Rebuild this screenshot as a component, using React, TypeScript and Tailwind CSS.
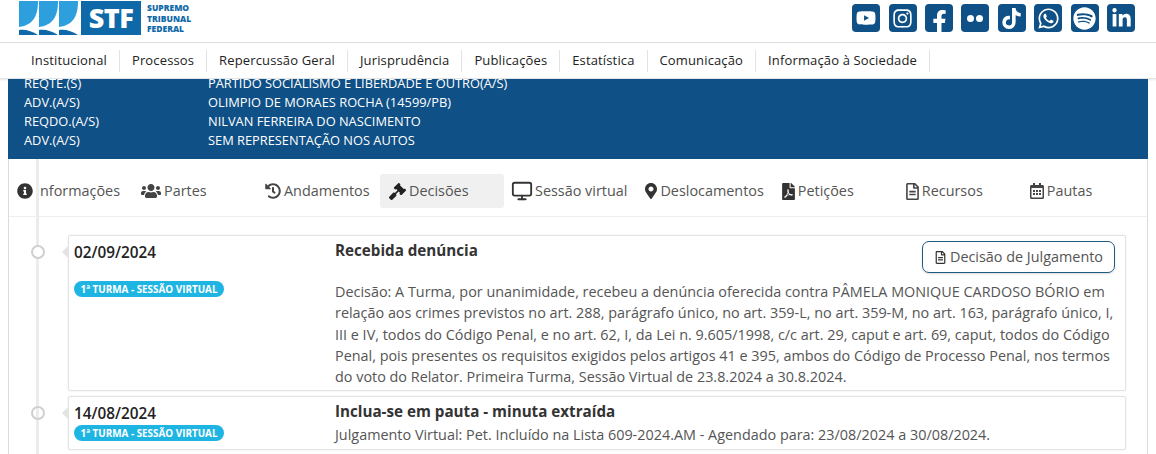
import { FaYoutube, FaInstagram, FaFacebookF, FaTiktok, FaWhatsapp, FaSpotify, FaLinkedinIn, FaInfoCircle, FaUsers, FaHistory, FaGavel, FaMapMarkerAlt, FaFilePdf, FaRegFileAlt, FaRegCalendarAlt } from "react-icons/fa";
import { LuMonitor } from "react-icons/lu";
import type { ReactNode } from "react";

const navItems = ["Institucional", "Processos", "Repercussão Geral", "Jurisprudência", "Publicações", "Estatística", "Comunicação", "Informação à Sociedade"];

const parties = [
  ["REQTE.(S)", "PARTIDO SOCIALISMO E LIBERDADE E OUTRO(A/S)"],
  ["ADV.(A/S)", "OLIMPIO DE MORAES ROCHA (14599/PB)"],
  ["REQDO.(A/S)", "NILVAN FERREIRA DO NASCIMENTO"],
  ["ADV.(A/S)", "SEM REPRESENTAÇÃO NOS AUTOS"],
];

const tabs: { label: string; icon: ReactNode; active?: boolean }[] = [
  { label: "Informações", icon: <FaInfoCircle className="h-[16px] w-[16px] text-[#333]" /> },
  { label: "Partes", icon: <FaUsers className="h-[20px] w-[20px] text-[#444]" /> },
  { label: "Andamentos", icon: <FaHistory className="h-[16px] w-[16px] text-[#444]" /> },
  { label: "Decisões", icon: <FaGavel className="h-[17px] w-[17px] text-[#222]" />, active: true },
  { label: "Sessão virtual", icon: <LuMonitor className="-mr-[1px] -ml-[2px] h-[22px] w-[22px] text-[#333]" /> },
  { label: "Deslocamentos", icon: <FaMapMarkerAlt className="h-[16px] w-[12px] text-[#333]" /> },
  { label: "Petições", icon: <FaFilePdf className="h-[17px] w-[13px] text-[#333]" /> },
  { label: "Recursos", icon: <FaRegFileAlt className="h-[17px] w-[13px] text-[#444]" /> },
  { label: "Pautas", icon: <FaRegCalendarAlt className="h-[16px] w-[14px] text-[#444]" /> },
];

function Social({ children }: { children: ReactNode }) {
  return <div className="flex h-[28px] w-[28px] items-center justify-center overflow-hidden rounded-[4px] bg-[#0f5086] text-white">{children}</div>;
}

function Logo() {
  return (
    <div className="flex items-start pl-[19px] pt-px">
      <svg width="61" height="34" viewBox="0 0 61 34">
        {[0, 20, 40].map((x) => (
          <g key={x}>
            <path d={`M${x} 0H${x + 19}C${x + 19} 14 ${x + 15} 24 ${x} 26Z`} fill="#2d9fdc" />
            <path d={`M${x} 29C${x + 6} 28 ${x + 13} 30 ${x + 19} 34H${x}Z`} fill="#0f69a8" />
          </g>
        ))}
      </svg>
      <div className="ml-px flex h-[34px] w-[60px] items-center justify-center bg-[#0f69a8] text-[27px] font-extrabold tracking-[-0.5px] text-white">STF</div>
      <div className="mt-[2px] ml-[6px] text-[8.5px] leading-[10.5px] font-extrabold text-[#0f69a8]">
        <div>SUPREMO</div>
        <div>TRIBUNAL</div>
        <div>FEDERAL</div>
      </div>
    </div>
  );
}

function Card({ date, title, compact, button, children }: { date: string; title: string; compact?: boolean; button?: boolean; children: ReactNode }) {
  return (
    <div className="relative flex rounded-[2px] border border-[#e3e3e3] bg-white pl-[5px] shadow-[0_0_2px_rgba(0,0,0,0.08)]">
      <div className={`absolute top-[9px] left-[-38px] z-20 h-[14px] w-[14px] rounded-full border-2 border-[#cfcfcf] ${compact ? "" : "bg-white"}`} />
      <div className="absolute top-[9px] left-[-7px] h-0 w-0 border-y-[7px] border-r-[7px] border-y-transparent border-r-[#e3e3e3]" />
      <div className="w-[261px] shrink-0">
        <div className="mt-[6px] text-[15.3px] leading-[20px] font-semibold text-[#222]">{date}</div>
        <div className={`flex h-[16px] w-[150px] items-center justify-center rounded-full bg-[#1fb5e3] text-[9.9px] font-bold whitespace-nowrap text-white ${compact ? "mt-[2px]" : "mt-[19px]"}`}>1ª TURMA - SESSÃO VIRTUAL</div>
      </div>
      <div className="min-w-0 flex-1 pr-[10px]">
        <div className="flex justify-between">
          <div className="mt-[4px] text-[15.2px] leading-[20px] font-bold text-[#333]">{title}</div>
          {button && (
            <div className="mt-[5px] flex h-[32px] w-[193px] items-center justify-center gap-[3px] rounded-[7px] border border-[#1f5a80] text-[14.4px] text-[#555] shadow-[0_1px_2px_rgba(0,0,0,0.15)]">
              <FaRegFileAlt className="text-[13px] text-[#333]" />
              Decisão de Julgamento
            </div>
          )}
        </div>
        {children}
      </div>
    </div>
  );
}

export default function App() {
  return (
    <div className="h-[454px] w-[1156px] overflow-hidden bg-white font-['Open_Sans',sans-serif]">
      <div className="flex h-[43px] items-start justify-between border-b border-[#dfdfdf]">
        <Logo />
        <div className="mt-[4px] mr-[21px] flex gap-[8.4px]">
          <Social><FaYoutube className="text-[20px]" /></Social>
          <Social><FaInstagram className="text-[21px]" /></Social>
          <Social><FaFacebookF className="mt-[6px] text-[23px]" /></Social>
          <Social>
            <div className="flex gap-[2px]">
              <span className="h-[7px] w-[7px] rounded-full bg-white" />
              <span className="h-[7px] w-[7px] rounded-full bg-white" />
            </div>
          </Social>
          <Social><FaTiktok className="text-[21px]" /></Social>
          <Social><FaWhatsapp className="text-[23px]" /></Social>
          <Social><FaSpotify className="text-[23px]" /></Social>
          <Social><FaLinkedinIn className="text-[21px]" /></Social>
        </div>
      </div>
      <div className="flex h-[36px] items-center border-b border-[#e4e4e4] pl-[19px] shadow-[0_1px_2px_rgba(0,0,0,0.1)]">
        {navItems.map((item) => (
          <div key={item} className="flex h-[22px] items-center border-r border-[#e3e3e3] px-[12px] text-[13px] font-medium tracking-[0.14px] whitespace-nowrap text-[#222]">
            {item}
          </div>
        ))}
      </div>
      <div className="mx-[8px]">
        <div className="h-[80px] overflow-hidden bg-[#0f5086] pl-[16px] text-[12.83px] leading-[19px] text-white">
          <div className="-mt-[5px]">
            {parties.map(([role, name], i) => (
              <div key={i} className="flex h-[19px]">
                <div className="w-[184px]">{role}</div>
                <div>{name}</div>
              </div>
            ))}
          </div>
        </div>
        <div className="relative h-[295px] overflow-hidden border-x border-[#dcdcdc]">
          <div className="absolute top-0 bottom-0 left-[27px] z-10 w-[3px] bg-[#ececec]" />
          <div className="-ml-px flex h-[58px] items-start border-b border-[#eeeeee] pt-[15px]">
            {tabs.map((tab) => (
              <div key={tab.label} className={`flex h-[34px] min-w-[124px] items-center gap-[3px] rounded-[3px] px-[9px] text-[14.4px] whitespace-nowrap text-[#555] ${tab.active ? "bg-[#f0f0f0] text-[#333]" : ""}`}>
                {tab.icon}
                {tab.label}
              </div>
            ))}
          </div>
          <div className="flex flex-col gap-[5px] pt-[18px] pr-[21px] pl-[59px]">
            <Card date="02/09/2024" title="Recebida denúncia" button>
              <p className="mt-[8px] pb-[3px] text-[14.4px] leading-[21.3px] text-[#555]">
                Decisão: A Turma, por unanimidade, recebeu a denúncia oferecida contra PÂMELA MONIQUE CARDOSO BÓRIO em relação aos crimes previstos no art. 288, parágrafo único, no art. 359-L, no art. 359-M, no art. 163, parágrafo único, I, III e IV, todos do Código Penal, e no art. 62, I, da Lei n. 9.605/1998, c/c art. 29, caput e art. 69, caput, todos do Código Penal, pois presentes os requisitos exigidos pelos artigos 41 e 395, ambos do Código de Processo Penal, nos termos do voto do Relator. Primeira Turma, Sessão Virtual de 23.8.2024 a 30.8.2024.
              </p>
            </Card>
            <Card date="14/08/2024" title="Inclua-se em pauta - minuta extraída" compact>
              <p className="mt-[4px] pb-[4px] text-[14.4px] leading-[20px] text-[#555]">Julgamento Virtual: Pet. Incluído na Lista 609-2024.AM - Agendado para: 23/08/2024 a 30/08/2024.</p>
            </Card>
          </div>
        </div>
      </div>
    </div>
  );
}
